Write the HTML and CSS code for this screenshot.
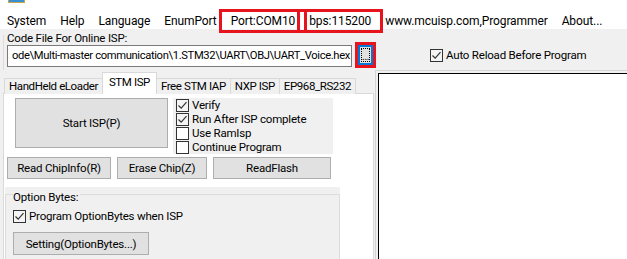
FILE: index.html
```html
<!DOCTYPE html>
<html lang="en">
<head>
    <meta charset="UTF-8">
    <title>mcuisp</title>
    <link rel="stylesheet" href="styles.css">
</head>
<body>

<!-- Title bar (cut off at the top) -->
<div class="titlebar">
    <span class="app-icon"></span>
</div>

<!-- Menu -->
<div class="menubar">
    <span class="menu-item">System</span>
    <span class="menu-item">Help</span>
    <span class="menu-item">Language</span>
    <span class="menu-item">EnumPort</span>
    <span class="menu-item marked">Port:COM10</span>
    <span class="menu-item marked">bps:115200</span>
    <span class="menu-item">www.mcuisp.com,Programmer</span>
    <span class="menu-item">About...</span>
</div>

<div class="main">
    <!-- File selection -->
    <div class="top-row">
        <div class="file-group">
            <div class="group-label">Code File For Online ISP:</div>
            <div class="file-input">ode\Multi-master communication\1.STM32\UART\OBJ\UART_Voice.hex</div>
        </div>
        <div class="browse-mark">
            <div class="browse-btn"><span class="focus-rect">...</span></div>
        </div>
        <label class="check auto-reload">
            <span class="box checked"><svg viewBox="0 0 11 11"><path d="M1.5 5.5 L4.2 8.2 L9.5 2.2" fill="none" stroke="#333" stroke-width="1.2"/></svg></span>
            Auto Reload Before Program
        </label>
    </div>

    <div class="bottom-row">
        <!-- Tabs -->
        <div class="tabs">
            <div class="tab-strip">
                <span class="tab">HandHeld eLoader</span>
                <span class="tab active">STM ISP</span>
                <span class="tab">Free STM IAP</span>
                <span class="tab">NXP ISP</span>
                <span class="tab">EP968_RS232</span>
            </div>
            <div class="tab-panel">
                <div class="isp-row">
                    <button class="btn start-btn">Start ISP(P)</button>
                    <div class="isp-options">
                        <label class="check">
                            <span class="box checked"><svg viewBox="0 0 11 11"><path d="M1.5 5.5 L4.2 8.2 L9.5 2.2" fill="none" stroke="#333" stroke-width="1.2"/></svg></span>
                            Verify
                        </label>
                        <label class="check">
                            <span class="box checked"><svg viewBox="0 0 11 11"><path d="M1.5 5.5 L4.2 8.2 L9.5 2.2" fill="none" stroke="#333" stroke-width="1.2"/></svg></span>
                            Run After ISP complete
                        </label>
                        <label class="check">
                            <span class="box"></span>
                            Use RamIsp
                        </label>
                        <label class="check">
                            <span class="box"></span>
                            Continue Program
                        </label>
                    </div>
                </div>
                <div class="btn-row">
                    <button class="btn read-info">Read ChipInfo(R)</button>
                    <button class="btn erase">Erase Chip(Z)</button>
                    <button class="btn read-flash">ReadFlash</button>
                </div>
                <div class="option-area">
                    <div class="option-group">
                        <div class="option-label">Option Bytes:</div>
                        <label class="check">
                            <span class="box checked"><svg viewBox="0 0 11 11"><path d="M1.5 5.5 L4.2 8.2 L9.5 2.2" fill="none" stroke="#333" stroke-width="1.2"/></svg></span>
                            Program OptionBytes when ISP
                        </label>
                        <button class="btn setting">Setting(OptionBytes...)</button>
                    </div>
                </div>
            </div>
        </div>

        <!-- Log output -->
        <div class="log-frame">
            <div class="log"></div>
        </div>
    </div>
</div>

</body>
</html>
```

FILE: styles.css
```css
body {
    margin: 0;
    background: #f0f0f0;
    font-family: Roboto, sans-serif;
    font-size: 11.5px;
    letter-spacing: -0.2px;
    color: #000;
    overflow: hidden;
}
.titlebar {
    height: 7px;
    background: #fff;
    overflow: hidden;
}
.app-icon {
    display: block;
    margin-left: 8px;
    width: 15px;
    height: 2px;
    background: #3a8fd0;
    border: 1px solid #c9a64a;
    border-top: none;
}
.menubar {
    display: flex;
    height: 22px;
    align-items: flex-end;
    background: #fff;
    font-size: 12px;
    letter-spacing: -0.1px;
}
.menu-item {
    padding: 0 7px;
    margin-bottom: 1px;
    line-height: 14px;
    white-space: nowrap;
}
.marked {
    outline: 3px solid #e8141d;
    outline-offset: 2px;
}
.top-row {
    display: flex;
    align-items: flex-start;
    height: 41px;
}
.file-group {
    margin-left: 3px;
    margin-top: 6px;
    padding-left: 3px;
    border-left: 1px solid #dcdcdc;
    height: 35px;
}
.group-label {
    line-height: 14px;
    margin-top: -4px;
}
.file-input {
    width: 339px;
    height: 20px;
    padding-left: 4px;
    font-size: 11.2px;
    line-height: 20px;
    letter-spacing: -0.35px;
    background: #fff;
    border: 1px solid #7a7a7a;
    white-space: nowrap;
    overflow: hidden;
}
.browse-mark {
    margin-left: 3px;
    margin-top: 13px;
    border: 3px solid #e8141d;
}
.browse-btn {
    width: 11px;
    height: 16px;
    border: 2px solid #0078d7;
    background: #e1e1e1;
}
.focus-rect {
    display: block;
    height: 12px;
    margin: 1px;
    border: 1px dotted #000;
    font-size: 10px;
    line-height: 16px;
    text-align: center;
    overflow: hidden;
}
.check {
    display: flex;
    align-items: center;
    gap: 3px;
    line-height: 14px;
    white-space: nowrap;
}
.box {
    width: 11px;
    height: 11px;
    border: 1px solid #333;
    background: #fff;
    flex: none;
}
.box.checked {
    background: #f4f4f4;
}
.box svg {
    display: block;
    width: 11px;
    height: 11px;
}
.auto-reload {
    margin-left: 54px;
    margin-top: 19px;
}
.bottom-row {
    display: flex;
    height: 190px;
}
.tabs {
    margin-left: 3px;
    margin-top: 3px;
    width: 371px;
}
.tab-strip {
    display: flex;
    align-items: flex-end;
    height: 21px;
    padding-left: 1px;
    letter-spacing: -0.4px;
}
.tab {
    height: 15px;
    line-height: 15px;
    padding: 0 4px;
    border: 1px solid #d9d9d9;
    border-bottom: none;
    border-left: none;
    background: #f0f0f0;
    white-space: nowrap;
}
.tab:first-child {
    border-left: 1px solid #d9d9d9;
}
.tab.active {
    height: 21px;
    line-height: 18px;
    padding: 0 6px;
    background: #fff;
    border-left: 1px solid #d9d9d9;
    margin-left: -1px;
    position: relative;
    z-index: 1;
}
.tab-panel {
    height: 200px;
    background: #fff;
    border: 1px solid #d9d9d9;
    margin-top: -1px;
    padding-top: 4px;
}
.isp-row {
    display: flex;
    gap: 5px;
}
.btn {
    font-family: Roboto, sans-serif;
    font-size: 11.5px;
    letter-spacing: -0.2px;
    color: #000;
    background: #e1e1e1;
    border: 1px solid #adadad;
    padding: 0;
}
.start-btn {
    margin-left: 11px;
    width: 153px;
    height: 50px;
}
.isp-options {
    width: 157px;
    height: 56px;
    background: #f0f0f0;
    padding-left: 3px;
}
.isp-options .check {
    height: 14px;
}
.btn-row {
    display: flex;
    gap: 6px;
    margin-top: 3px;
    margin-left: 3px;
}
.btn-row .btn {
    height: 22px;
}
.read-info {
    width: 104px;
}
.erase {
    width: 90px;
}
.read-flash {
    width: 118px;
}
.option-area {
    width: 335px;
    margin-top: 8px;
    margin-left: 1px;
    padding-top: 7px;
    background: #f0f0f0;
}
.option-group {
    height: 70px;
    padding-left: 7px;
    border: 1px solid #dcdcdc;
}
.option-label {
    width: fit-content;
    line-height: 14px;
    margin-top: -5px;
    background: #f0f0f0;
    padding-right: 2px;
}
.option-group .check {
    margin-top: 5px;
}
.setting {
    margin-top: 9px;
    width: 136px;
    height: 23px;
}
.log-frame {
    margin-left: 1px;
    flex: 1;
    border-left: 1px solid #d4d4d4;
    border-top: 1px solid #d4d4d4;
    padding: 2px 0 0 2px;
}
.log {
    height: 100%;
    background: #fff;
    border: 1px solid #000;
    border-right: none;
    border-bottom: none;
}
```
